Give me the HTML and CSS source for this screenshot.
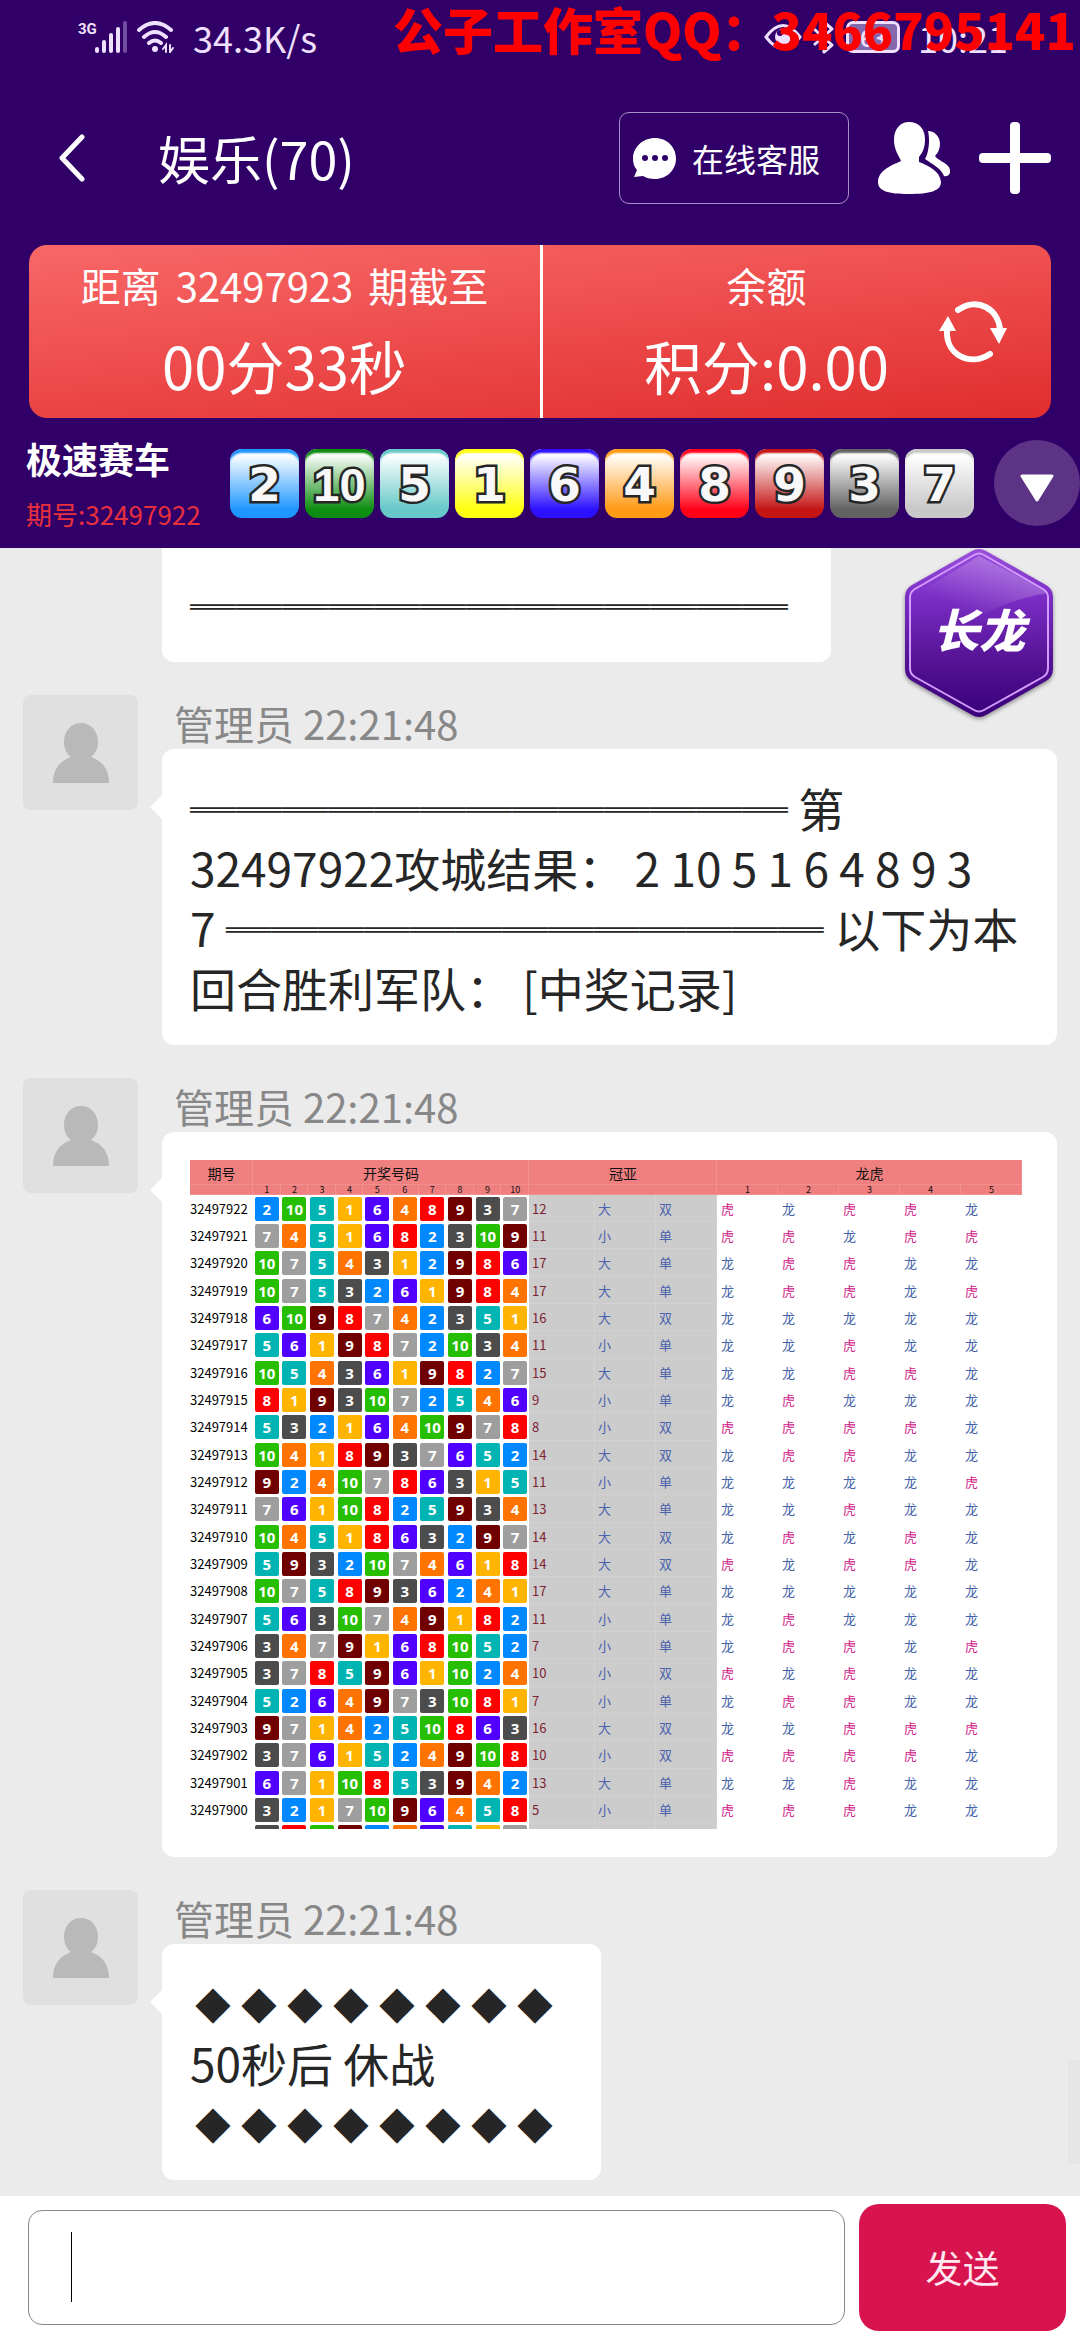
FILE: index.html
```html
<!DOCTYPE html>
<html lang="zh-CN">
<head>
  <meta charset="UTF-8">
  <meta name="viewport" content="width=device-width, initial-scale=1.0">
  <title>娱乐(70)</title>
  <link rel="stylesheet" href="styles.css">
</head>
<body>
  <div class="app">
    <header class="header">
      <div class="status-bar">
        <span class="network">3G</span>
        <svg class="signal" viewBox="0 0 32 32" width="32" height="32" fill="#f0e0ff">
          <rect x="0" y="26" width="4" height="6" rx="2"/>
          <rect x="7" y="19" width="4" height="13" rx="2"/>
          <rect x="14" y="12" width="4" height="20" rx="2"/>
          <rect x="21" y="6" width="4" height="26" rx="2"/>
          <rect x="28" y="0" width="4" height="32" rx="2" opacity=".35"/>
        </svg>
        <svg class="wifi" viewBox="0 0 38 32" width="38" height="32" fill="none" stroke="#f0e0ff" stroke-width="4" stroke-linecap="round">
          <path d="M2 9Q18 -5 34 9M7 16Q18 6 29 16M12 22Q18 17 24 22"/>
          <circle cx="18" cy="28" r="3" fill="#f0e0ff" stroke="none"/>
          <path d="M29 31V24L26 28M33 24V31L36 27" stroke-width="2"/>
        </svg>
        <span class="status-text">34.3K/s</span>
        <div class="status-right">
          <svg viewBox="0 0 38 26" width="38" height="26" fill="none" stroke="#f0e0ff" stroke-width="3">
            <path d="M2 13Q19 -10 36 13Q19 36 2 13Z"/>
            <circle cx="19" cy="13" r="8" fill="#f0e0ff" stroke="none"/>
            <circle cx="16" cy="9" r="3" fill="#300068" stroke="none"/>
          </svg>
          <svg viewBox="0 0 24 34" width="24" height="34" fill="none" stroke="#f0e0ff" stroke-width="3" stroke-linejoin="round">
            <path d="M2 9L20 25L12 32V2L20 9L2 25"/>
          </svg>
          <span class="battery">63</span>
          <span class="status-text">10:21</span>
        </div>
        <span class="watermark">公子工作室QQ：3466795141</span>
      </div>

      <nav class="nav">
        <button class="icon-btn back" aria-label="返回">
          <svg viewBox="0 0 26 48" width="26" height="48" fill="none" stroke="#fff" stroke-width="5" stroke-linecap="round" stroke-linejoin="round">
            <path d="M23 3L3 24L23 45"/>
          </svg>
        </button>
        <h1 class="title">娱乐(70)</h1>
        <button class="service">
          <svg viewBox="0 0 43 41" width="43" height="41">
            <path fill="#fff" d="M22 0C34 0 43 9 43 20.500S34 41 22 41C17 41 13 40 10 38L1 39L4 32C1 29 0 25 0 20.500C0 9 10 0 22 0Z"/>
            <g fill="#300068"><circle cx="12" cy="20" r="3"/><circle cx="22" cy="20" r="3"/><circle cx="32" cy="20" r="3"/></g>
          </svg>
          在线客服
        </button>
        <button class="icon-btn" aria-label="成员">
          <svg viewBox="0 0 72 72" width="72" height="72" fill="#fff">
            <path d="M31 0C41 0 47 7 47 17C47 25 45 30 41 35V40C51 44 62 49 63 60C63 69 52 72 31 72S0 69 0 60C0 49 12 44 23 39C21 34 16 28 16 18C16 7 22 0 31 0Z"/>
            <path d="M50 9C57 9 62 15 62 22C62 27 60 31 57 34C60 39 71 41 72 48C73 53 69 55 66 54C63 46 54 42 47 37C51 31 52 17 50 9Z"/>
          </svg>
        </button>
        <button class="icon-btn" aria-label="更多">
          <svg viewBox="0 0 72 72" width="72" height="72" fill="#fff">
            <rect x="0" y="31" width="72" height="10" rx="4"/>
            <rect x="31" y="0" width="10" height="72" rx="4"/>
          </svg>
        </button>
      </nav>

      <section class="board">
        <div class="board-cell">
          <div class="board-label">距离 <span class="board-issue">32497923</span> 期截至</div>
          <div class="board-value">00分33秒</div>
        </div>
        <div class="board-cell balance">
          <div class="board-label">余额</div>
          <div class="board-value">积分:0.00</div>
        </div>
        <button class="icon-btn refresh" aria-label="刷新">
          <svg viewBox="0 0 70 62" width="70" height="62" fill="none" stroke="#fff" stroke-width="6" stroke-linecap="round">
            <path d="M20 9C40 -5 61 9 62 29M52 53C32 66 8 54 9 30"/>
            <path d="M52 27H69L61 43ZM1 30H18L10 15Z" fill="#fff" stroke="none"/>
          </svg>
        </button>
      </section>

      <section class="result">
        <div class="result-info">
          <strong class="game">极速赛车</strong>
          <span class="issue">期号:32497922</span>
        </div>
        <div class="balls">
          <span class="ball ball-2">2</span>
          <span class="ball ball-10">10</span>
          <span class="ball ball-5">5</span>
          <span class="ball ball-1">1</span>
          <span class="ball ball-6">6</span>
          <span class="ball ball-4">4</span>
          <span class="ball ball-8">8</span>
          <span class="ball ball-9">9</span>
          <span class="ball ball-3">3</span>
          <span class="ball ball-7">7</span>
        </div>
        <button class="toggle" aria-label="展开">
          <svg viewBox="0 0 34 28" width="34" height="28">
            <path d="M2 2H32L17 26Z" fill="#fff" stroke="#fff" stroke-width="3" stroke-linejoin="round"/>
          </svg>
        </button>
      </section>
    </header>

    <main class="chat">
      <div class="message continued">
        <div class="bubble bubble-short"><span class="rule">═════════════</span></div>
      </div>

      <div class="message">
        <div class="avatar"><svg viewBox="0 0 56 60" width="56" height="60"><path d="M28 0C38 0 45 8 45 19C45 26 42 31 38 34C49 38 56 46 56 60H0C0 46 7 38 18 34C14 31 11 26 11 19C11 8 18 0 28 0Z" fill="#b9b9b9"/></svg></div>
        <div class="content">
          <div class="name">管理员 22:21:48</div>
          <div class="bubble"><span class="rule">═════════════</span> 第<br>32497922攻城结果： 2 10 5 1 6 4 8 9 3<br>7 <span class="rule">═════════════</span> 以下为本<br>回合胜利军队： [中奖记录]</div>
        </div>
      </div>

      <div class="message">
        <div class="avatar"><svg viewBox="0 0 56 60" width="56" height="60"><path d="M28 0C38 0 45 8 45 19C45 26 42 31 38 34C49 38 56 46 56 60H0C0 46 7 38 18 34C14 31 11 26 11 19C11 8 18 0 28 0Z" fill="#b9b9b9"/></svg></div>
        <div class="content">
          <div class="name">管理员 22:21:48</div>
          <div class="bubble bubble-table">
            <div class="history-wrap">
              <table class="history">
                <colgroup>
                  <col class="col-issue">
                  <col span="10">
                  <col class="col-sum">
                  <col class="col-pair" span="7">
                </colgroup>
                <thead>
                  <tr class="head">
                    <th>期号</th>
                    <th colspan="10">开奖号码</th>
                    <th colspan="3">冠亚</th>
                    <th colspan="5">龙虎</th>
                  </tr>
                  <tr class="subhead">
                    <th></th>
                    <th>1</th><th>2</th><th>3</th><th>4</th><th>5</th><th>6</th><th>7</th><th>8</th><th>9</th><th>10</th>
                    <th colspan="3"></th>
                    <th>1</th><th>2</th><th>3</th><th>4</th><th>5</th>
                  </tr>
                </thead>
                <tbody id="history-body"></tbody>
              </table>
            </div>
          </div>
        </div>
      </div>

      <div class="message">
        <div class="avatar"><svg viewBox="0 0 56 60" width="56" height="60"><path d="M28 0C38 0 45 8 45 19C45 26 42 31 38 34C49 38 56 46 56 60H0C0 46 7 38 18 34C14 31 11 26 11 19C11 8 18 0 28 0Z" fill="#b9b9b9"/></svg></div>
        <div class="content">
          <div class="name">管理员 22:21:48</div>
          <div class="bubble bubble-short">
            <div class="diamonds"><span>◆</span><span>◆</span><span>◆</span><span>◆</span><span>◆</span><span>◆</span><span>◆</span><span>◆</span></div>
            <div>50秒后 休战</div>
            <div class="diamonds"><span>◆</span><span>◆</span><span>◆</span><span>◆</span><span>◆</span><span>◆</span><span>◆</span><span>◆</span></div>
          </div>
        </div>
      </div>

      <button class="dragon">
        <svg viewBox="0 0 148 170" width="148" height="170">
          <defs>
            <linearGradient id="hex" x1="0" y1="0" x2="0" y2="1">
              <stop offset="0" stop-color="#9a50dc"/>
              <stop offset=".3" stop-color="#7a2cc4"/>
              <stop offset=".65" stop-color="#561496"/>
              <stop offset="1" stop-color="#380078"/>
            </linearGradient>
            <linearGradient id="shine" x1="0" y1="1" x2="1" y2="0">
              <stop offset=".3" stop-color="#fff" stop-opacity="0"/>
              <stop offset="1" stop-color="#fff" stop-opacity=".35"/>
            </linearGradient>
          </defs>
          <path d="M67 3Q74 -1 81 3L141 37Q148 41 148 49V121Q148 129 141 133L81 167Q74 171 67 167L7 133Q0 129 0 121V49Q0 41 7 37Z" fill="url(#hex)"/>
          <path d="M8 48L74 8L140 42L143 45Q100 52 64 74Q30 86 8 80Z" fill="url(#shine)"/>
          <path d="M69 7Q74 4 79 7L138 41Q143 44 143 49V120Q143 126 138 129L79 162Q74 165 69 162L10 129Q5 126 5 120V49Q5 44 10 41Z" fill="none" stroke="#d49cff" stroke-width="2"/>
        </svg>
        <span class="dragon-text">长龙</span>
      </button>
      <div class="scroll-thumb"></div>
    </main>

    <form class="composer">
      <div class="field">
        <input class="message-input" type="text" aria-label="消息">
        <span class="caret"></span>
      </div>
      <button class="send" type="button">发送</button>
    </form>
  </div>

  <script src="script.js"></script>
</body>
</html>
```
FILE: styles.css
```css
* {
  box-sizing: border-box;
}
body {
  margin: 0;
  font-family: "Noto Sans CJK SC", sans-serif;
  color: #262626;
}
button, input {
  font-family: inherit;
}
button {
  padding: 0;
  border: none;
  background: none;
  color: #fff;
  cursor: pointer;
}
svg {
  display: block;
  flex-shrink: 0;
}
.app {
  min-height: 100vh;
  display: flex;
  flex-direction: column;
}

/* header */
.header {
  background-color: #300068;
  color: #fff;
}
.status-bar {
  position: relative;
  display: flex;
  align-items: center;
  height: 76px;
  padding-left: 78px;
  padding-bottom: 2px;
  color: #f0e0ff;
}
.network {
  width: 17px;
  height: 36px;
  font-family: Roboto, sans-serif;
  font-size: 15px;
  line-height: 20px;
  font-weight: bold;
}
.wifi {
  margin: 0 18px 0 10px;
}
.status-text {
  font-size: 36px;
  line-height: 40px;
}
.status-right {
  display: flex;
  align-items: center;
  gap: 10px;
  margin-left: auto;
  margin-right: 72px;
}
.battery {
  width: 54px;
  height: 32px;
  margin-right: 8px;
  border: 3px solid #f0e0ff;
  border-radius: 7px;
  background-color: #8468ae;
  font-size: 22px;
  line-height: 26px;
  font-weight: bold;
  text-align: center;
}
.watermark {
  position: absolute;
  top: 0;
  right: 4px;
  font-size: 50px;
  line-height: 56px;
  font-weight: 900;
  color: #f00;
  white-space: nowrap;
}
.nav {
  display: flex;
  align-items: center;
  gap: 29px;
  margin-top: 36px;
  padding: 0 29px;
}
.icon-btn {
  display: flex;
  align-items: center;
  justify-content: center;
}
.back {
  width: 100px;
  padding-right: 14px;
}
.title {
  flex: 1;
  margin: 0;
  font-size: 52px;
  line-height: 60px;
  font-weight: normal;
}
.service {
  display: flex;
  align-items: center;
  gap: 16px;
  width: 230px;
  height: 92px;
  padding-left: 13px;
  border: 1px solid #a890c8;
  border-radius: 10px;
  font-size: 32px;
}
.board {
  display: flex;
  align-items: center;
  height: 173px;
  margin: 41px 29px 0;
  border-radius: 18px;
  background: linear-gradient(174deg, #f86867, #e12d2e);
}
.board-cell {
  flex: 1;
  height: 100%;
  padding-top: 14px;
  text-align: center;
}
.balance {
  padding-left: 52px;
  border-left: 3px solid #fff;
}
.board-label {
  font-size: 40px;
  line-height: 52px;
}
.board-issue {
  margin: 0 6px;
}
.board-value {
  margin-top: 14px;
  font-size: 58px;
  line-height: 80px;
}
.board-cell:first-child {
  flex: 0 0 50%;
}
.refresh {
  width: 70px;
  margin-right: 43px;
}
.result {
  display: flex;
  align-items: center;
  height: 130px;
  padding-left: 26px;
}
.result-info {
  display: flex;
  flex-direction: column;
  width: 204px;
  padding-top: 6px;
}
.game {
  font-size: 36px;
  line-height: 56px;
}
.issue {
  font-size: 26px;
  line-height: 56px;
  color: #e8303c;
}
.balls {
  display: flex;
  gap: 6px;
}
.ball {
  width: 69px;
  height: 69px;
  border-radius: 12px;
  font-family: "DejaVu Sans", sans-serif;
  font-size: 47px;
  line-height: 72px;
  font-weight: bold;
  text-align: center;
  color: #f8f8f8;
  -webkit-text-stroke: 5px #262626;
  paint-order: stroke fill;
  box-shadow: inset 0 5px 2px -1px var(--tone);
  background: linear-gradient(#fff 8%, var(--tone) 88%);
}
.ball-1 { --tone: #ffff10; }
.ball-2 { --tone: #1e96ff; }
.ball-3 { --tone: #626262; }
.ball-4 { --tone: #ff9a14; }
.ball-5 { --tone: #66c8c8; }
.ball-6 { --tone: #2c10ff; }
.ball-7 { --tone: #c8c8c8; }
.ball-8 { --tone: #ff0018; }
.ball-9 { --tone: #c41414; }
.ball-10 {
  --tone: #0c8c10;
  font-family: "Liberation Sans", sans-serif;
}
.toggle {
  display: flex;
  align-items: center;
  justify-content: center;
  width: 86px;
  height: 86px;
  margin-left: auto;
  padding-top: 10px;
  border-radius: 50%;
  background-color: #5c3385;
}

/* chat */
.chat {
  position: relative;
  flex: 1;
  display: flex;
  flex-direction: column;
  gap: 33px;
  padding: 0 23px 16px;
  background-color: #ebebeb;
}
.message {
  display: flex;
  align-items: flex-start;
  gap: 24px;
}
.continued {
  padding-left: 139px;
}
.avatar {
  flex-shrink: 0;
  display: flex;
  align-items: center;
  justify-content: center;
  width: 115px;
  height: 115px;
  border-radius: 8px;
  background-color: #dfe0df;
}
.content {
  flex: 1;
  display: flex;
  flex-direction: column;
  align-items: flex-start;
}
.name {
  height: 54px;
  padding: 4px 0 0 12px;
  font-size: 40px;
  line-height: 48px;
  color: #888;
}
.bubble {
  position: relative;
  min-width: 100px;
  width: 100%;
  padding: 28px;
  border-radius: 12px;
  background-color: #fff;
  font-size: 46px;
  line-height: 60px;
  white-space: nowrap;
}
.bubble-short {
  width: auto;
  padding-right: 43px;
}
.continued .bubble {
  padding-top: 26px;
  border-radius: 0 0 12px 12px;
}
.content .bubble::before {
  content: "";
  position: absolute;
  left: -12px;
  top: 46px;
  border: 12px solid transparent;
  border-left: none;
  border-right-color: #fff;
}
.rule {
  font-weight: bold;
}
.diamonds {
  display: grid;
  grid-template-columns: repeat(8, 46px);
  font-family: "DejaVu Sans", sans-serif;
  text-align: center;
}
.bubble-table {
  padding-right: 35px;
}

/* draw history */
.history-wrap {
  height: 669px;
  overflow: hidden;
}
.history {
  width: 100%;
  table-layout: fixed;
  border-collapse: separate;
  border-spacing: 0;
  font-size: 13px;
  line-height: 20px;
}
.history th, .history td {
  height: 27px;
  padding: 0;
}
.history tbody tr:nth-child(3n) td {
  height: 28px;
}
.col-issue {
  width: 63px;
}
.col-sum {
  width: 66px;
}
.col-pair {
  width: 61px;
}
.history th {
  background-color: #f08080;
  color: #111;
  font-weight: normal;
  box-shadow: inset -1px -1px #f29090;
}
.history .head th {
  height: 25px;
  font-size: 14px;
}
.history .subhead th {
  height: 10px;
  font-size: 9px;
  line-height: 10px;
}
.history .period {
  color: #000;
}
.num {
  display: block;
  width: 24px;
  height: 24px;
  margin: 0 auto;
  border-radius: 2px;
  font-family: "Noto Sans", sans-serif;
  font-size: 15px;
  line-height: 24px;
  font-weight: bold;
  text-align: center;
  color: #fff;
}
.num-1 { background-color: #ffb400; }
.num-2 { background-color: #0088ff; }
.num-3 { background-color: #4c4c4c; }
.num-4 { background-color: #ff7300; }
.num-5 { background-color: #00b4b4; }
.num-6 { background-color: #5000ff; }
.num-7 { background-color: #9e9e9e; }
.num-8 { background-color: #ff0000; }
.num-9 { background-color: #700000; }
.num-10 { background-color: #26be00; }
.history .sum, .history .trait {
  padding-left: 3px;
  background-color: #ccc;
  box-shadow: inset -1px -1px #d2d2d2;
  color: #7e2232;
}
.history .trait {
  color: #4a62ac;
}
.history .side {
  padding-left: 4px;
  color: #4463a8;
}
.history .tiger {
  color: #d02088;
}

.dragon {
  position: absolute;
  top: 0;
  right: 27px;
  width: 148px;
  height: 170px;
  filter: drop-shadow(0 2px 2px rgba(0, 0, 0, .4));
}
.dragon-text {
  position: absolute;
  inset: 0;
  font-size: 46px;
  line-height: 160px;
  font-weight: 900;
  font-style: italic;
  text-align: center;
}
.scroll-thumb {
  position: absolute;
  right: 0;
  bottom: 32px;
  width: 12px;
  height: 104px;
  background-color: #e5e5e5;
}

/* composer */
.composer {
  display: flex;
  align-items: center;
  gap: 14px;
  height: 144px;
  padding: 0 14px 2px 28px;
  background-color: #fff;
}
.field {
  position: relative;
  flex: 1;
}
.message-input {
  display: block;
  width: 100%;
  height: 115px;
  padding: 0 42px;
  border: 1px solid #888;
  border-radius: 14px;
  background-color: #fff;
  font-size: 46px;
  outline: none;
}
.caret {
  position: absolute;
  left: 43px;
  top: 22px;
  width: 1px;
  height: 70px;
  background-color: #000;
}
.send {
  width: 207px;
  height: 127px;
  border-radius: 20px;
  background-color: #d8144e;
  font-size: 37px;
  color: #ffe8f0;
}
```
FILE: script.js
```js
const draws = [
  [2, 10, 5, 1, 6, 4, 8, 9, 3, 7],
  [7, 4, 5, 1, 6, 8, 2, 3, 10, 9],
  [10, 7, 5, 4, 3, 1, 2, 9, 8, 6],
  [10, 7, 5, 3, 2, 6, 1, 9, 8, 4],
  [6, 10, 9, 8, 7, 4, 2, 3, 5, 1],
  [5, 6, 1, 9, 8, 7, 2, 10, 3, 4],
  [10, 5, 4, 3, 6, 1, 9, 8, 2, 7],
  [8, 1, 9, 3, 10, 7, 2, 5, 4, 6],
  [5, 3, 2, 1, 6, 4, 10, 9, 7, 8],
  [10, 4, 1, 8, 9, 3, 7, 6, 5, 2],
  [9, 2, 4, 10, 7, 8, 6, 3, 1, 5],
  [7, 6, 1, 10, 8, 2, 5, 9, 3, 4],
  [10, 4, 5, 1, 8, 6, 3, 2, 9, 7],
  [5, 9, 3, 2, 10, 7, 4, 6, 1, 8],
  [10, 7, 5, 8, 9, 3, 6, 2, 4, 1],
  [5, 6, 3, 10, 7, 4, 9, 1, 8, 2],
  [3, 4, 7, 9, 1, 6, 8, 10, 5, 2],
  [3, 7, 8, 5, 9, 6, 1, 10, 2, 4],
  [5, 2, 6, 4, 9, 7, 3, 10, 8, 1],
  [9, 7, 1, 4, 2, 5, 10, 8, 6, 3],
  [3, 7, 6, 1, 5, 2, 4, 9, 10, 8],
  [6, 7, 1, 10, 8, 5, 3, 9, 4, 2],
  [3, 2, 1, 7, 10, 9, 6, 4, 5, 8]
];
// only the top edge of this draw shows at the bottom of the table
const nextDraw = [3, 8, 10, 9, 2, 4, 6, 5, 1, 7];
const latestIssue = 32497922;

function rowHtml(nums, index) {
  const sum = nums[0] + nums[1];
  const balls = nums.map(n => `<td><span class="num num-${n}">${n}</span></td>`).join('');

  // 1st vs 10th, 2nd vs 9th ... the bigger front number is the dragon
  let sides = '';
  for (let i = 0; i < 5; i++) {
    const dragon = nums[i] > nums[9 - i];
    sides += `<td class="side${dragon ? '' : ' tiger'}">${dragon ? '龙' : '虎'}</td>`;
  }

  return `<tr><td class="period">${latestIssue - index}</td>${balls}` +
    `<td class="sum">${sum}</td>` +
    `<td class="trait">${sum > 11 ? '大' : '小'}</td>` +
    `<td class="trait">${sum % 2 ? '单' : '双'}</td>${sides}</tr>`;
}

function peekRowHtml(nums) {
  const balls = nums.map(n => `<td><span class="num num-${n}"></span></td>`).join('');
  return `<tr><td></td>${balls}<td class="sum"></td><td class="trait"></td><td class="trait"></td><td colspan="5"></td></tr>`;
}

document.getElementById('history-body').innerHTML =
  draws.map(rowHtml).join('') + peekRowHtml(nextDraw);
```
